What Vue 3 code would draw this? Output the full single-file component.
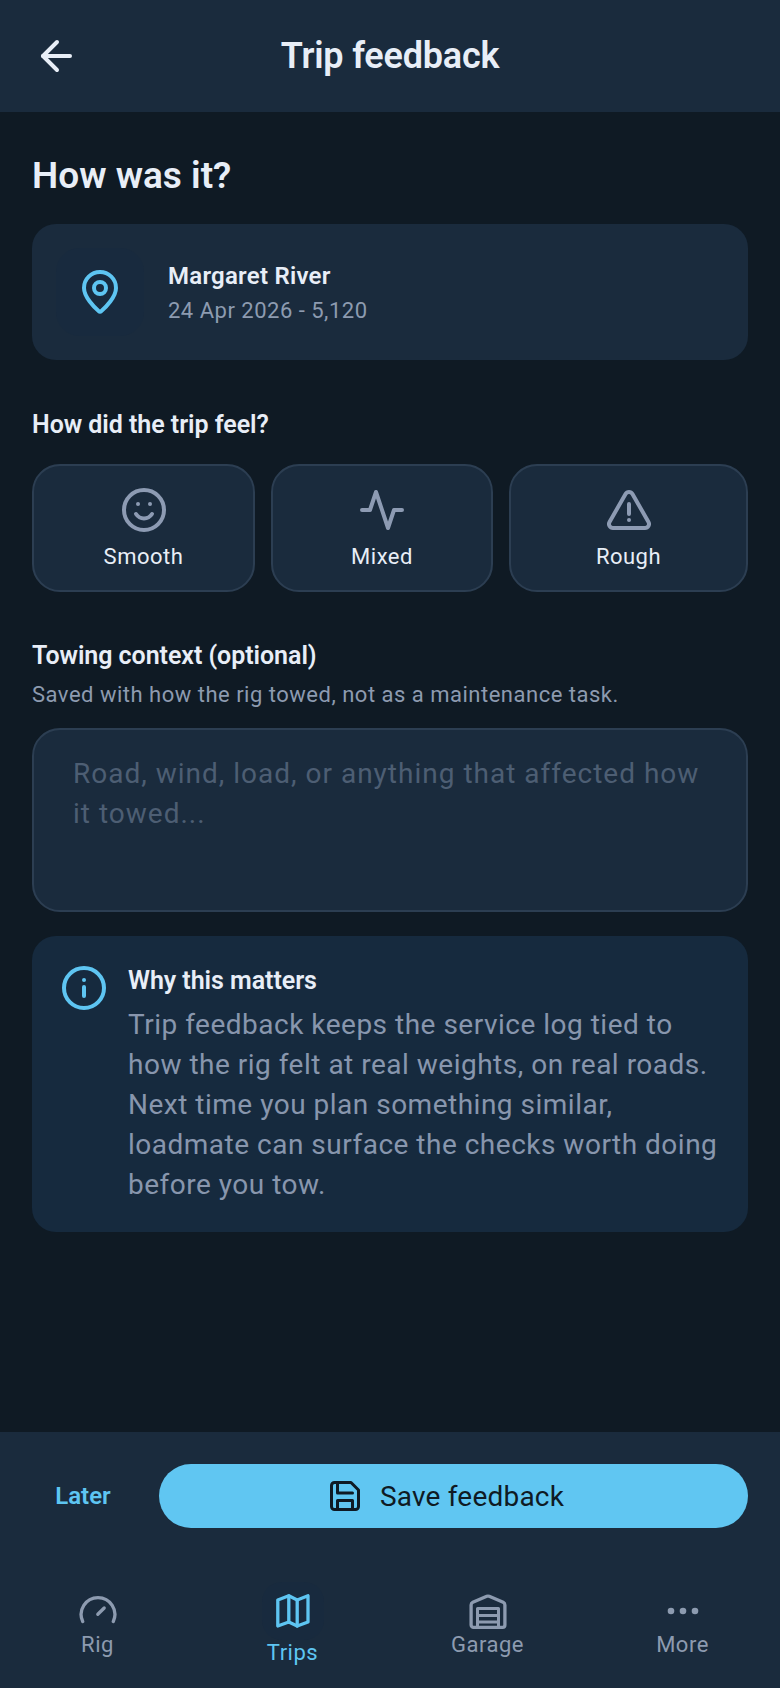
<template>
  <div class="screen">
    <header class="topbar">
      <button class="back" aria-label="Back">
        <svg width="48" height="48" viewBox="0 0 24 24" fill="none" stroke="#e8eef7" stroke-width="2" stroke-linecap="round" stroke-linejoin="round">
          <path d="M19 12H5.500" />
          <path d="M12.500 5l-7 7 7 7" />
        </svg>
      </button>
      <h1 class="title">Trip feedback</h1>
    </header>

    <main class="content">
      <h2 class="heading">How was it?</h2>

      <section class="trip-card">
        <div class="trip-icon">
          <svg width="48" height="48" viewBox="0 0 24 24" fill="none" stroke="#5ec5f2" stroke-width="2" stroke-linecap="round" stroke-linejoin="round">
            <path d="M20 10c0 4.500-5.200 9.700-7.300 11.500a1 1 0 0 1-1.400 0C9.200 19.700 4 14.500 4 10a8 8 0 0 1 16 0z" />
            <circle cx="12" cy="10" r="3" />
          </svg>
        </div>
        <div class="trip-text">
          <div class="trip-name">Margaret River</div>
          <div class="trip-meta">24 Apr 2026 - 5,120</div>
        </div>
      </section>

      <h3 class="label feel-label">How did the trip feel?</h3>
      <div class="feel-row">
        <button v-for="o in options" :key="o.name" class="feel">
          <svg width="48" height="48" viewBox="0 0 24 24" fill="none" stroke="#8d9bb3" stroke-width="2" stroke-linecap="round" stroke-linejoin="round">
            <template v-if="o.name === 'Smooth'">
              <circle cx="12" cy="12" r="10" />
              <path d="M8 14c1 1.500 2.400 2.200 4 2.200s3-.7 4-2.200" />
              <path d="M9 9h.01M15 9h.01" />
            </template>
            <path v-else-if="o.name === 'Mixed'" d="M2 12h4l3-9 6 18 3-9h4" />
            <template v-else>
              <path d="M21.730 18l-8-14a2 2 0 0 0-3.460 0l-8 14A2 2 0 0 0 4 21h16a2 2 0 0 0 1.730-3z" />
              <path d="M12 9v5M12 17h.01" />
            </template>
          </svg>
          <span>{{ o.name }}</span>
        </button>
      </div>

      <h3 class="label tow-label">Towing context (optional)</h3>
      <p class="hint">Saved with how the rig towed, not as a maintenance task.</p>
      <textarea class="notes" placeholder="Road, wind, load, or anything that affected how it towed..."></textarea>

      <section class="why">
        <svg class="why-icon" width="48" height="48" viewBox="0 0 24 24" fill="none" stroke="#5ec5f2" stroke-width="2" stroke-linecap="round">
          <circle cx="12" cy="12" r="10" />
          <path d="M12 11.500v4.500M12 8h.01" />
        </svg>
        <div>
          <div class="why-title">Why this matters</div>
          <p class="why-text">Trip feedback keeps the service log tied to how the rig felt at real weights, on real roads. Next time you plan something similar, loadmate can surface the checks worth doing before you tow.</p>
        </div>
      </section>
    </main>

    <footer class="bottom">
      <div class="actions">
        <button class="later">Later</button>
        <button class="save">
          <svg width="36" height="36" viewBox="0 0 24 24" fill="none" stroke="#0f1a24" stroke-width="2" stroke-linecap="round" stroke-linejoin="round">
            <path d="M19 21H5a2 2 0 0 1-2-2V5a2 2 0 0 1 2-2h11l5 5v11a2 2 0 0 1-2 2z" />
            <path d="M17 21v-6H7v6" />
            <path d="M7 3v7h10" />
          </svg>
          <span>Save feedback</span>
        </button>
      </div>
      <nav class="tabs">
        <a v-for="t in tabs" :key="t.name" class="tab" :class="{ active: t.active }">
          <span class="tab-icon">
            <svg width="40" height="40" viewBox="0 0 40 40" fill="none" stroke="currentColor" stroke-width="3.300" stroke-linecap="round" stroke-linejoin="round">
              <template v-if="t.name === 'Rig'">
                <path d="M4.700 30.500A16.850 16.850 0 1 1 35.300 30.500" />
                <path d="M19.800 23.300L26.200 17" />
              </template>
              <template v-else-if="t.name === 'Trips'">
                <path d="M4.800 9L15.800 4.800L24.200 9L35 4.800V31L24.200 35L15.800 31L4.800 35Z" />
                <path d="M15.800 4.800V31M24.200 9V35" />
              </template>
              <template v-else-if="t.name === 'Garage'">
                <path d="M5.500 36.400A2.400 2.400 0 0 1 3.100 34V14A3 3 0 0 1 4.800 11.300L18.800 5.300A3 3 0 0 1 21.200 5.300L35.200 11.300A3 3 0 0 1 36.900 14V34A2.400 2.400 0 0 1 34.500 36.400Z" />
                <path d="M9.500 36V17.500H30.500V36M9.500 24.500H30.500M9.500 31H30.500" stroke-width="3" />
              </template>
              <g v-else fill="currentColor" stroke="none">
                <circle cx="8" cy="20" r="3.300" />
                <circle cx="20" cy="20" r="3.300" />
                <circle cx="32" cy="20" r="3.300" />
              </g>
            </svg>
          </span>
          <span class="tab-name">{{ t.name }}</span>
        </a>
      </nav>
    </footer>
  </div>
</template>

<script setup>
const options = [{ name: "Smooth" }, { name: "Mixed" }, { name: "Rough" }];
const tabs = [
  { name: "Rig" },
  { name: "Trips", active: true },
  { name: "Garage" },
  { name: "More" },
];
</script>

<style>
html,
body {
  margin: 0;
  background: #0f1a24;
}
</style>

<style scoped>
* {
  box-sizing: border-box;
}
.screen {
  width: 780px;
  height: 1688px;
  display: flex;
  flex-direction: column;
  background: #0f1a24;
  font-family: Roboto, "Liberation Sans", sans-serif;
  color: #e8eef7;
}
button {
  font-family: inherit;
  border: 0;
  background: none;
  padding: 0;
}
.topbar {
  height: 112px;
  flex: none;
  background: #1a2b3d;
  display: flex;
  align-items: center;
  justify-content: center;
  position: relative;
}
.back {
  position: absolute;
  left: 32px;
  top: 32px;
  width: 48px;
  height: 48px;
}
.title {
  margin: 0;
  font-size: 36px;
  font-weight: 600;
  letter-spacing: -0.2px;
  color: #e8eef7;
}
.content {
  flex: 1;
  padding: 0 32px;
}
.heading {
  margin: 44px 0 0;
  font-size: 37px;
  line-height: 40px;
  font-weight: 600;
}
.trip-card {
  margin-top: 28px;
  height: 136px;
  border-radius: 24px;
  background: #1a2b3d;
  padding: 0 24px;
  display: flex;
  align-items: center;
  gap: 24px;
}
.trip-icon {
  width: 88px;
  height: 88px;
  border-radius: 24px;
  background: #182a3e;
  display: flex;
  align-items: center;
  justify-content: center;
}
.trip-text {
  margin-top: 4px;
}
.trip-name {
  font-size: 24px;
  line-height: 34px;
  margin-top: -1px;
  margin-bottom: 1px;
  font-weight: 600;
  letter-spacing: 0.25px;
}
.trip-meta {
  font-size: 22px;
  line-height: 34px;
  color: #8d9bb0;
  letter-spacing: 0.5px;
}
.label {
  margin: 0;
  font-size: 25px;
  line-height: 34px;
  font-weight: 600;
  letter-spacing: -0.05px;
}
.feel-label {
  margin-top: 48px;
}
.feel-row {
  margin-top: 22px;
  display: grid;
  grid-template-columns: 223px 222px 1fr;
  gap: 16px;
}
.feel {
  height: 128px;
  border: 2px solid #2c3e52;
  border-radius: 28px;
  background: #1a2b3d;
  color: #e8eef7;
  font-size: 22px;
  letter-spacing: 0.5px;
  display: flex;
  flex-direction: column;
  align-items: center;
  justify-content: flex-start;
  padding-top: 20px;
  gap: 10px;
}
.tow-label {
  margin-top: 47px;
}
.hint {
  margin: 5px 0 0;
  font-size: 22px;
  line-height: 34px;
  color: #8d9bb0;
  letter-spacing: 0.5px;
}
.notes {
  display: block;
  margin-top: 16px;
  width: 100%;
  height: 184px;
  border: 2px solid #2c3e52;
  border-radius: 28px;
  background: #1a2b3d;
  padding: 24px 30px 24px 39px;
  font-family: inherit;
  font-size: 28px;
  line-height: 40px;
  letter-spacing: 1px;
  color: #e8eef7;
  resize: none;
  outline: none;
}
.notes::placeholder {
  color: #4d5e73;
  opacity: 1;
}
.why {
  margin-top: 24px;
  height: 296px;
  border-radius: 24px;
  background: #162a3e;
  padding: 28px 24px 24px 28px;
  display: flex;
  gap: 20px;
}
.why-icon {
  flex: none;
}
.why-title {
  font-size: 25px;
  line-height: 34px;
  font-weight: 600;
  letter-spacing: -0.05px;
}
.why-text {
  margin: 7px 0 0;
  font-size: 28px;
  line-height: 40px;
  letter-spacing: 0.5px;
  color: #8896ad;
}
.bottom {
  flex: none;
  height: 256px;
  background: #1a2b3d;
}
.actions {
  display: flex;
  align-items: center;
  height: 64px;
  margin-top: 32px;
  padding: 0 32px;
}
.later {
  width: 102px;
  margin-right: 25px;
  font-size: 24px;
  font-weight: 600;
  color: #5ec5f2;
}
.save {
  flex: 1;
  height: 64px;
  border-radius: 32px;
  background: #60c6f2;
  color: #0f1a24;
  font-size: 28px;
  letter-spacing: 0.2px;
  display: flex;
  align-items: center;
  justify-content: center;
  gap: 17px;
  padding-right: 16px;
}
.tabs {
  display: grid;
  grid-template-columns: repeat(4, 1fr);
  margin-top: 63px;
}
.tab {
  display: flex;
  flex-direction: column;
  align-items: center;
  color: #8d9bb0;
  font-size: 22px;
  line-height: 28px;
  letter-spacing: 0.5px;
}
.tab.active {
  color: #5ec5f2;
}
.tab-icon {
  width: 40px;
  height: 40px;
  display: flex;
  align-items: center;
  justify-content: center;
}
.tab.active .tab-icon {
  width: 62px;
  height: 58px;
  margin: -9px 0 -1px;
  border-radius: 20px;
  background: #182a3e;
}
</style>
